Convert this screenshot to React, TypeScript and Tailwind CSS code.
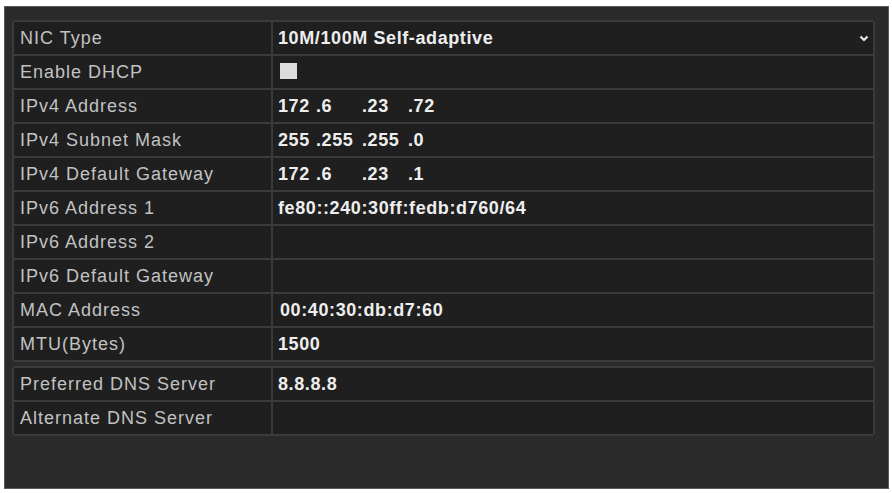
const font = { fontFamily: '"Liberation Sans", Arial, sans-serif' }

type Row = { label: string; value?: React.ReactNode }

function IpValue({ parts }: { parts: string[] }) {
  return (
    <span className="flex">
      <span className="w-[38px]">{parts[0]}</span>
      {parts.slice(1).map((p, i) => (
        <span key={i} className="w-[46px]">.{p}</span>
      ))}
    </span>
  )
}

function Chevron() {
  return (
    <svg width="10" height="7" viewBox="0 0 10 7" className="mr-[4px]">
      <path d="M1.5 1.5 L5 5 L8.5 1.5" stroke="#e8e8e8" strokeWidth="2.2" fill="none" />
    </svg>
  )
}

function Group({ rows }: { rows: Row[] }) {
  return (
    <div className="flex w-[863px] flex-col gap-[2px] rounded-[4px] border-2 border-[#3b3b3b] bg-[#3b3b3b]">
      {rows.map((r) => (
        <div key={r.label} className="grid grid-cols-[257px_1fr] gap-[2px]">
          <div className="flex h-[32px] items-center bg-[#1f1f1f] pl-[6px] text-[18px] tracking-[1px] text-[#c2c2c2]">
            {r.label}
          </div>
          <div className="flex h-[32px] items-center justify-between bg-[#1f1f1f] pl-[5px] text-[18px] font-bold tracking-[0.6px] text-[#eeeeee]">
            {r.value}
          </div>
        </div>
      ))}
    </div>
  )
}

export default function App() {
  const main: Row[] = [
    {
      label: 'NIC Type',
      value: (
        <>
          <span>10M/100M Self-adaptive</span>
          <Chevron />
        </>
      ),
    },
    { label: 'Enable DHCP', value: <span className="ml-[2px] mt-[-2px] h-[16px] w-[17px] bg-[#dcdcdc]" /> },
    { label: 'IPv4 Address', value: <IpValue parts={['172', '6', '23', '72']} /> },
    { label: 'IPv4 Subnet Mask', value: <IpValue parts={['255', '255', '255', '0']} /> },
    { label: 'IPv4 Default Gateway', value: <IpValue parts={['172', '6', '23', '1']} /> },
    { label: 'IPv6 Address 1', value: <span>fe80::240:30ff:fedb:d760/64</span> },
    { label: 'IPv6 Address 2' },
    { label: 'IPv6 Default Gateway' },
    { label: 'MAC Address', value: <span className="ml-[2px]">00:40:30:db:d7:60</span> },
    { label: 'MTU(Bytes)', value: <span>1500</span> },
  ]
  const dns: Row[] = [
    { label: 'Preferred DNS Server', value: <span>8.8.8.8</span> },
    { label: 'Alternate DNS Server' },
  ]

  return (
    <div className="h-[493px] w-[892px] overflow-hidden bg-white pl-[4px] pt-[6px]" style={font}>
      <div className="flex h-[483px] w-[885px] flex-col gap-[4px] border border-[#5a5a5a] bg-[#2a2a2a] pl-[7px] pt-[13px]">
        <Group rows={main} />
        <Group rows={dns} />
      </div>
    </div>
  )
}
